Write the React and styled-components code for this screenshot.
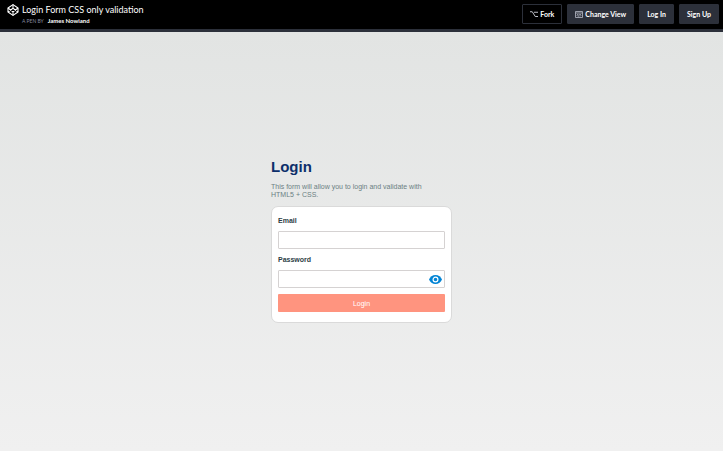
import React, { useState } from "react";
import styled, { createGlobalStyle } from "styled-components";

const App = () => {
  const [showPassword, setShowPassword] = useState(false);

  const handleToggle = () => {
    setShowPassword(!showPassword);
  };

  return (
    <Page>
      <GlobalStyle />
      <Header>
        <PenInfo>
          <LogoIcon />
          <div>
            <PenTitle>Login Form CSS only validation</PenTitle>
            <Byline>
              <span>A PEN BY</span> <a href="#author">James Nowland</a>
            </Byline>
          </div>
        </PenInfo>
        <Actions>
          <HeaderButton type="button" $outlined>
            <ForkIcon />
            Fork
          </HeaderButton>
          <HeaderButton type="button">
            <ViewIcon />
            Change View
          </HeaderButton>
          <HeaderLink href="#login">Log In</HeaderLink>
          <HeaderLink href="#signup">Sign Up</HeaderLink>
        </Actions>
      </Header>
      <Main>
        <LoginSection>
          <Heading>Login</Heading>
          <Intro>
            This form will allow you to login and validate with HTML5 + CSS.
          </Intro>
          <Form onSubmit={(e) => e.preventDefault()}>
            <Label htmlFor="email">Email</Label>
            <Field>
              <Input id="email" type="email" required />
            </Field>
            <Label htmlFor="password">Password</Label>
            <Field>
              <Input
                id="password"
                type={showPassword ? "text" : "password"}
                required
              />
              <EyeButton
                type="button"
                aria-label="Show password"
                onClick={handleToggle}
              >
                <EyeIcon />
              </EyeButton>
            </Field>
            <SubmitButton type="submit">Login</SubmitButton>
          </Form>
        </LoginSection>
      </Main>
    </Page>
  );
};

const LogoIcon = () => (
  <svg width="12" height="12" viewBox="0 0 24 24" fill="none" stroke="#fff" strokeWidth="2.2" strokeLinejoin="round">
    <path d="M12 1.200 22 8v8l-10 6.800L2 16V8z" />
    <path d="M12 1.200V8.500M12 15.500v7.300M2 8l10 7.500L22 8M2 16l10-7.500L22 16" />
  </svg>
);

const ForkIcon = () => (
  <svg width="8" height="8" viewBox="0 0 16 16" fill="none" stroke="#d3d5de" strokeWidth="1.8">
    <path d="M0 3.500h4.500l6 9.500H16M8 4.500h8" />
  </svg>
);

const ViewIcon = () => (
  <svg width="8" height="7" viewBox="0 0 16 14" fill="none" stroke="#b9bcc8" strokeWidth="1.6">
    <path d="M1 1h14v12H1zM1 4h14M6 6 4 8.500 6 11M10 6l2 2.500-2 2.500M8.700 6l-1.400 5" />
  </svg>
);

const EyeIcon = () => (
  <svg width="13" height="9" viewBox="0 0 26 18">
    <path fill="#0284d5" d="M13 0C7 0 2 3.700 0 9c2 5.300 7 9 13 9s11-3.700 13-9C24 3.700 19 0 13 0z" />
    <circle cx="13" cy="9" r="4.800" fill="#0284d5" stroke="#fff" strokeWidth="2.400" />
  </svg>
);

const GlobalStyle = createGlobalStyle`
  *,
  *::before,
  *::after {
    box-sizing: border-box;
  }
  body {
    margin: 0;
    font-family: "Liberation Sans", Arial, sans-serif;
  }
  h1, h2, p {
    margin: 0;
  }
`;

const Page = styled.div`
  min-height: 100vh;
  display: flex;
  flex-direction: column;
`;

const Header = styled.header`
  display: flex;
  align-items: flex-start;
  justify-content: space-between;
  padding: 4px 4px 3px 7px;
  background: #000;
  border-bottom: 3px solid #2c303a;
  font-family: Lato, sans-serif;
  color: #fff;
`;

const PenInfo = styled.div`
  display: flex;
  gap: 3px;

  svg {
    flex: none;
  }
`;

const PenTitle = styled.h1`
  font-size: 9px;
  line-height: 12px;
  font-weight: 400;
`;

const Byline = styled.p`
  display: flex;
  align-items: baseline;
  gap: 4px;
  font-size: 6px;
  line-height: 9px;
  color: #fff;

  span {
    font-size: 5px;
    color: #868ca0;
  }
  a {
    color: inherit;
    font-weight: 700;
    text-decoration: none;
  }
`;

const Actions = styled.div`
  display: flex;
  gap: 5px;
`;

const HeaderButton = styled.button`
  display: flex;
  align-items: center;
  gap: 2px;
  height: 20px;
  padding: 0 7px;
  border: 1px solid #2c303a;
  border-radius: 1px;
  background: ${({ $outlined }) => ($outlined ? "#000" : "#2c303a")};
  color: #fff;
  font-family: inherit;
  font-size: 7px;
  font-weight: 700;
  line-height: 10px;
  text-decoration: none;
  cursor: pointer;
`;

const HeaderLink = styled(HeaderButton).attrs({ as: "a" })``;

const Main = styled.main`
  flex: 1;
  display: flex;
  align-items: center;
  justify-content: center;
  padding-bottom: 2px;
  background: linear-gradient(#e2e4e3, #f0f0f0);
`;

const LoginSection = styled.section`
  width: 100%;
  max-width: 181px;
`;

const Heading = styled.h2`
  margin-bottom: 7px;
  font-size: 15px;
  line-height: 18px;
  color: #0d2f6b;
`;

const Intro = styled.p`
  margin-bottom: 7px;
  padding-right: 16px;
  font-size: 7px;
  line-height: 8px;
  color: #6b7f83;
`;

const Form = styled.form`
  display: flex;
  flex-direction: column;
  padding: 9px 6px 10px;
  background: #fff;
  border: 1px solid #dadada;
  border-radius: 7px;
`;

const Label = styled.label`
  margin-bottom: 5px;
  font-size: 7px;
  line-height: 10px;
  font-weight: 700;
  color: #2c3e46;
`;

const Field = styled.div`
  position: relative;
  margin-bottom: 6px;
`;

const Input = styled.input`
  display: block;
  width: 100%;
  height: 18px;
  padding: 0 5px;
  border: 1px solid #d5d2d2;
  border-radius: 1px;
  background: #fff;
  font-family: inherit;
  font-size: 7px;
`;

const EyeButton = styled.button`
  position: absolute;
  top: 0;
  right: 3px;
  height: 100%;
  display: flex;
  align-items: center;
  padding: 0;
  border: 0;
  background: none;
  cursor: pointer;
`;

const SubmitButton = styled.button`
  height: 18px;
  border: 0;
  border-radius: 1px;
  background: #ff947f;
  color: #fff;
  font-family: inherit;
  font-size: 7px;
  cursor: pointer;
`;

export default App;
